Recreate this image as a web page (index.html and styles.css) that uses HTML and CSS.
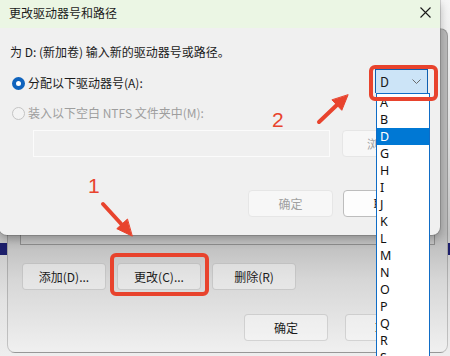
FILE: index.html
```html
<!DOCTYPE html>
<html lang="zh-CN">
<head>
    <meta charset="utf-8">
    <title>更改驱动器号和路径</title>
    <link rel="stylesheet" href="styles.css">
</head>

<body>
    <div class="band"></div>

    <section class="win back">
        <div class="volume-list"></div>
        <div class="btn-row">
            <button class="btn">添加(D)...</button>
            <button class="btn">更改(C)...</button>
            <button class="btn">删除(R)</button>
        </div>
        <div class="btn-row end">
            <button class="btn">确定</button>
            <button class="btn">取消</button>
        </div>
    </section>

    <section class="win front">
        <header class="titlebar">
            <span>更改驱动器号和路径</span>
            <svg class="close" width="11" height="11" viewBox="0 0 11 11">
                <path d="M0.5 0.5 L10.5 10.5 M10.5 0.5 L0.5 10.5" stroke="#1a1a1a" stroke-width="1.1" fill="none"/>
            </svg>
        </header>
        <div class="content">
            <p class="prompt">为 D: (新加卷) 输入新的驱动器号或路径。</p>
            <div class="option">
                <label class="radio checked"><span class="mark"></span>分配以下驱动器号(A):</label>
                <div class="combo">
                    <span>D</span>
                    <svg width="9" height="5" viewBox="0 0 9 5">
                        <path d="M0.5 0.5 L4.5 4.5 L8.5 0.5" stroke="#6b6b6b" stroke-width="1" fill="none"/>
                    </svg>
                </div>
            </div>
            <label class="radio disabled"><span class="mark"></span>装入以下空白 NTFS 文件夹中(M):</label>
            <div class="path-row">
                <div class="field"></div>
                <button class="btn off">浏览...</button>
            </div>
            <div class="btn-row end">
                <button class="btn off">确定</button>
                <button class="btn default">取消</button>
            </div>
        </div>
    </section>

    <ul class="dropdown">
        <li>A</li>
        <li>B</li>
        <li class="selected">D</li>
        <li>G</li>
        <li>H</li>
        <li>I</li>
        <li>J</li>
        <li>K</li>
        <li>L</li>
        <li>M</li>
        <li>N</li>
        <li>O</li>
        <li>P</li>
        <li>Q</li>
        <li>R</li>
        <li>S</li>
    </ul>

    <!-- annotations -->
    <div class="mark-box combo-box"></div>
    <div class="mark-box change-box"></div>
    <span class="step step-1">1</span>
    <span class="step step-2">2</span>
    <svg class="arrows" width="450" height="356" viewBox="0 0 450 356">
        <g stroke="#e8432d" stroke-width="4" stroke-linecap="round" fill="#e8432d">
            <line x1="103" y1="204" x2="124" y2="227"/>
            <polygon points="132,236 116.8,228.7 127.2,219.3" stroke-width="1" stroke-linejoin="round"/>
            <line x1="319" y1="122" x2="339" y2="103"/>
            <polygon points="348,95 341.8,110.3 332.2,100.1" stroke-width="1" stroke-linejoin="round"/>
        </g>
    </svg>
</body>

</html>
```

FILE: styles.css
```css
html,
body {
    margin: 0;
    padding: 0;
    width: 450px;
    height: 356px;
    overflow: hidden;
}

body {
    position: relative;
    font-family: "Noto Sans CJK SC", "Noto Sans", sans-serif;
    font-size: 12px;
    color: #1b1b1b;
    background: linear-gradient(to bottom, #f6f6f6 0px, #e6e6e6 120px, #c4c4c4 235px, #e2e2e2 300px, #eeeeee 356px);
}

/* window far behind, only its header stripe shows */
.band {
    position: absolute;
    left: 0;
    right: 0;
    top: 243px;
    height: 12px;
    background-color: #1d1f6b;
}

.win {
    position: absolute;
    box-sizing: border-box;
}

.btn {
    box-sizing: border-box;
    width: 84px;
    height: 27px;
    padding: 0;
    font-family: inherit;
    font-size: 12px;
    color: #1b1b1b;
    background-color: rgba(255, 255, 255, 0.35);
    border: 1px solid rgba(0, 0, 0, 0.13);
    border-radius: 4px;
}

.btn-row {
    display: flex;
    gap: 11px;
}

.btn-row.end {
    justify-content: flex-end;
}

/* back dialog */
.back {
    left: 7px;
    top: 28px;
    width: 441px;
    height: 325px;
    padding: 14px 18px 0 12px;
    border: 1px solid rgba(0, 0, 0, 0.18);
    border-radius: 8px;
    background: linear-gradient(to bottom, #b9b9b9 205px, #d6d6d6 250px, #efefef 320px);
}

.volume-list {
    height: 201px;
    border: 1px solid #8d8d8d;
    border-top: 0;
    margin-right: -6px;
    background-color: #c3c3c3;
}

.back .btn-row {
    margin-top: 18px;
    padding-left: 2px;
}

.back .btn-row.end {
    margin-top: 24px;
    gap: 17px;
}

/* front dialog */
.front {
    left: -1px;
    top: 0;
    width: 441px;
    height: 235px;
    background-color: #f0f0f0;
    border-radius: 0 0 8px 8px;
    box-shadow: 0 0 0 1px rgba(0, 0, 0, 0.14), 0 4px 10px rgba(0, 0, 0, 0.28);
}

.titlebar {
    display: flex;
    justify-content: space-between;
    align-items: center;
    height: 28px;
    padding: 0 9px 3px 10px;
    box-sizing: border-box;
    background-color: #ebf6e4;
    line-height: 16px;
}

.close {
    margin-right: 0;
}

.content {
    padding: 0 12px 0 13px;
}

.prompt {
    margin: 16px 0 0 -2px;
    line-height: 16px;
}

.option {
    display: flex;
    justify-content: space-between;
    align-items: flex-start;
    margin-top: 9px;
}

.radio {
    display: flex;
    align-items: center;
    gap: 3px;
    line-height: 16px;
}

.option .radio {
    margin-top: 6px;
}

.radio .mark {
    box-sizing: border-box;
    width: 13px;
    height: 13px;
    border-radius: 50%;
}

.radio.checked .mark {
    border: 4px solid #0f63bd;
    background-color: #fff;
}

.radio.disabled {
    margin-top: 12px;
    color: #9e9e9e;
}

.radio.disabled .mark {
    border: 1px solid #c4c4c4;
    background-color: #f3f3f3;
}

.combo {
    box-sizing: border-box;
    display: flex;
    justify-content: space-between;
    align-items: center;
    width: 53px;
    height: 24px;
    margin-right: 0;
    padding: 0 6px 0 4px;
    font-size: 13px;
    background-color: #cce4f7;
    border: 1px solid #0f5fb0;
    border-bottom: 0;
}

.path-row {
    display: flex;
    gap: 12px;
    margin-top: 9px;
    padding-left: 21px;
}

.field {
    width: 297px;
    height: 27px;
    box-sizing: border-box;
    border: 1px solid #fbfbfb;
}

.btn.off {
    color: #a0a0a0;
    background-color: #f7f7f7;
    border-color: #e6e6e6;
}

.btn.default {
    background-color: #fdfdfd;
    border-color: #bdbdbd;
}

.front .btn-row {
    margin-top: 33px;
    gap: 10px;
}

.front .btn-row .btn {
    width: 85px;
}

/* open letter list */
.dropdown {
    position: absolute;
    left: 376px;
    top: 93px;
    width: 54px;
    height: 270px;
    margin: 0;
    padding: 0;
    box-sizing: border-box;
    list-style: none;
    background-color: #fff;
    border: 1px solid #0f6cc6;
    border-top-width: 1px;
    font-family: "Noto Sans", sans-serif;
    font-size: 12.5px;
}

.dropdown li {
    height: 17px;
    line-height: 17px;
    padding-left: 3px;
    color: #111;
}

.dropdown li.selected {
    background-color: #0078d4;
    color: #fff;
}

/* red annotations */
.mark-box {
    position: absolute;
    box-sizing: border-box;
    border: 4px solid #e8432d;
    border-radius: 6px;
}

.combo-box {
    left: 369px;
    top: 65px;
    width: 69px;
    height: 36px;
}

.change-box {
    left: 110px;
    top: 253px;
    width: 99px;
    height: 43px;
}

.step {
    position: absolute;
    font-family: "Liberation Sans", sans-serif;
    font-size: 21px;
    line-height: 21px;
    color: #e8432d;
}

.step-1 {
    left: 88px;
    top: 175px;
}

.step-2 {
    left: 272px;
    top: 109px;
}

.arrows {
    position: absolute;
    left: 0;
    top: 0;
    pointer-events: none;
}
```
